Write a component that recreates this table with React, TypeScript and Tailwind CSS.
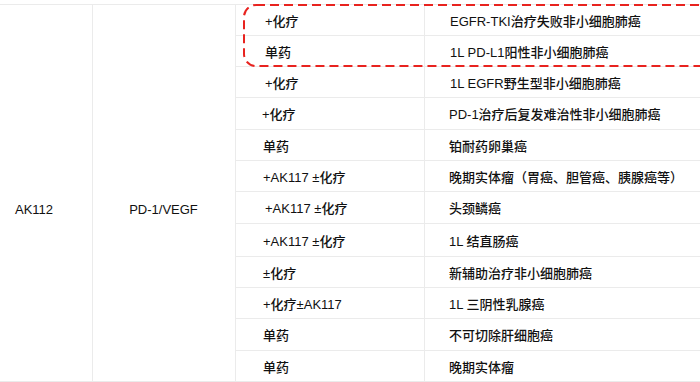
const rows = [
  { h: "h-[31px]", drug: "+化疗", ind: "EGFR-TKI治疗失败非小细胞肺癌", dp: "pl-[29px]", ip: "pl-[25px]" },
  { h: "h-[31px]", drug: "单药", ind: "1L PD-L1阳性非小细胞肺癌", dp: "pl-[29px]", ip: "pl-[25px]" },
  { h: "h-[31px]", drug: "+化疗", ind: "1L EGFR野生型非小细胞肺癌", dp: "pl-[29px]", ip: "pl-[25px]" },
  { h: "h-[32px]", drug: "+化疗", ind: "PD-1治疗后复发难治性非小细胞肺癌", dp: "pl-[26px]", ip: "pl-[24px]" },
  { h: "h-[31px]", drug: "单药", ind: "铂耐药卵巢癌", dp: "pl-[27px]", ip: "pl-[24px]" },
  { h: "h-[31px]", drug: "+AK117 ±化疗", ind: "晚期实体瘤（胃癌、胆管癌、胰腺癌等）", dp: "pl-[27px]", ip: "pl-[24px]" },
  { h: "h-[32px]", drug: "+AK117 ±化疗", ind: "头颈鳞癌", dp: "pl-[29px]", ip: "pl-[24px]" },
  { h: "h-[33px]", drug: "+AK117 ±化疗", ind: "1L 结直肠癌", dp: "pl-[27px]", ip: "pl-[24px]" },
  { h: "h-[31px]", drug: "±化疗", ind: "新辅助治疗非小细胞肺癌", dp: "pl-[27px]", ip: "pl-[24px]" },
  { h: "h-[31px]", drug: "+化疗±AK117", ind: "1L 三阴性乳腺癌", dp: "pl-[27px]", ip: "pl-[24px]" },
  { h: "h-[32px]", drug: "单药", ind: "不可切除肝细胞癌", dp: "pl-[27px]", ip: "pl-[24px]" },
  { h: "h-[31px]", drug: "单药", ind: "晚期实体瘤", dp: "pl-[27px]", ip: "pl-[24px]" },
];

export default function App() {
  return (
    <div
      className="relative w-[700px] h-[382px] overflow-hidden bg-white text-[13px] font-medium text-[#111]"
      style={{ fontFamily: '"Liberation Sans", Arial, "Noto Sans CJK SC", sans-serif' }}
    >
      <div className="mt-[4px] flex w-[760px] border-t border-[#ebebeb]">
        {/* molecule */}
        <div className="flex w-[93px] shrink-0 items-center border-r border-b border-[#ebebeb] pt-[34px] pl-[15px]">
          AK112
        </div>
        {/* target */}
        <div className="flex w-[143px] shrink-0 items-center justify-center border-r border-b border-[#ebebeb] pt-[34px] pr-[1px]">
          PD-1/VEGF
        </div>
        {/* regimens + indications */}
        <div className="flex flex-1 flex-col">
          {rows.map((r, i) => (
            <div key={i} className={`flex ${r.h} border-b border-[#ebebeb]`}>
              <div className={`flex w-[189px] shrink-0 items-center border-r border-[#ebebeb] pt-[3px] ${r.dp}`}>
                {r.drug}
              </div>
              <div className={`flex flex-1 items-center pt-[3px] ${r.ip}`}>{r.ind}</div>
            </div>
          ))}
        </div>
      </div>

      {/* highlight annotation */}
      <svg
        className="absolute left-[243px] top-[4px]"
        width="480"
        height="64"
        viewBox="0 0 480 64"
        fill="none"
      >
        <rect
          x="1"
          y="1"
          width="476"
          height="61"
          rx="12"
          stroke="#e8231f"
          strokeWidth="2"
          strokeDasharray="9 5"
        />
      </svg>
    </div>
  );
}
